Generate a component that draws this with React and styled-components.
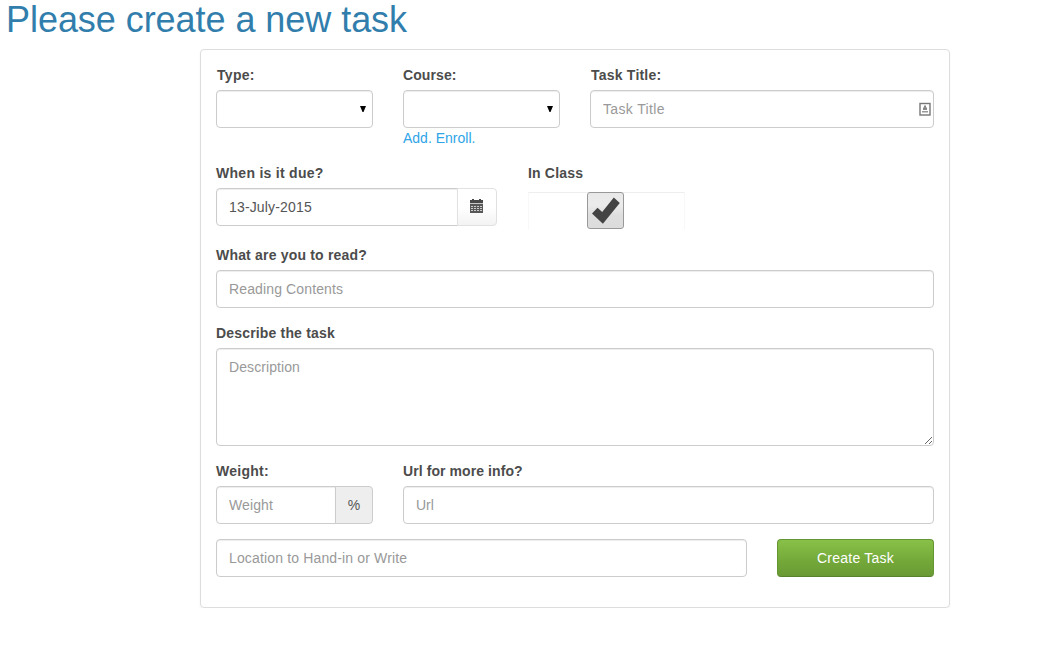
import React from "react";
import styled, { createGlobalStyle, css } from "styled-components";

const Global = createGlobalStyle`
  *, *::before, *::after { box-sizing: border-box; }
  body { margin: 0; background: #fff; color: #555; font: 14px/20px "Liberation Sans", Arial, sans-serif; }
`;
const Page = styled.main`
  display: flex;
  flex-direction: column;
`;
const Heading = styled.h1`
  margin: 0 0 9px 6px;
  height: 40px;
  font-size: 36px;
  line-height: 40px;
  font-weight: 400;
  letter-spacing: -0.05px;
  color: #317eac;
  white-space: nowrap;
`;
const Panel = styled.form`
  width: 750px;
  height: 559px;
  margin-left: 200px;
  padding: 15px;
  border: 1px solid #ddd;
  border-radius: 4px;
  box-shadow: 0 1px 2px rgba(0, 0, 0, 0.05);
`;
const Row = styled.div`
  display: grid;
  grid-template-columns: ${(p) => p.$cols || "1fr"};
  column-gap: ${(p) => p.$gap || 30}px;
  margin-bottom: 15px;
`;
const Field = styled.div`
  display: flex;
  flex-direction: column;
  min-width: 0;
`;
const Label = styled.label`
  height: 20px;
  margin-bottom: 5px;
  padding-left: ${(p) => p.$indent || 0}px;
  font-weight: 700;
  letter-spacing: ${(p) => p.$track || 0}px;
  color: #4c4c4c;
  white-space: nowrap;
`;
const control = css`
  display: block;
  width: 100%;
  min-width: 0;
  height: 38px;
  margin: 0;
  padding: 8px 12px;
  font: inherit;
  letter-spacing: ${(p) => p.$track || 0}px;
  color: #555;
  background: #fff;
  border: 1px solid #ccc;
  border-radius: 4px;
  box-shadow: inset 0 1px 1px rgba(0, 0, 0, 0.075);
  outline: 0;
  &::placeholder { color: #999; opacity: 1; }
`;
const Input = styled.input`
  ${control}
  ${(p) => p.$joined && "border-top-right-radius: 0; border-bottom-right-radius: 0;"}
`;
const TextArea = styled.textarea`
  ${control}
  height: 98px;
  resize: vertical;
`;
const SelectBox = styled.button.attrs({ type: "button" })`
  ${control}
  display: flex;
  align-items: center;
  justify-content: flex-end;
  padding: 0 5px 0 12px;
`;
const Caret = () => (
  <svg width="8" height="6" viewBox="0 0 8 6"><path d="M1 0h6L4.5 6h-1z" fill="#000" /></svg>
);
const Links = styled.div`
  height: 20px;
  color: #2fa4e7;
`;
const Link = styled.a`
  color: inherit;
`;
const Group = styled.div`
  display: flex;
`;
const IconInput = styled.div`
  display: grid;
  align-items: center;
  & > * { grid-area: 1 / 1; }
  & > svg { justify-self: end; margin-right: 3px; }
`;
const Addon = styled.span`
  flex: none;
  display: flex;
  align-items: center;
  justify-content: center;
  width: 38px;
  margin-left: -1px;
  border: 1px solid #ccc;
  border-radius: 0 4px 4px 0;
  background: #eee;
`;
const DateButton = styled.button`
  flex: none;
  display: flex;
  align-items: center;
  justify-content: center;
  width: 40px;
  height: 38px;
  margin-left: -1px;
  padding: 0 1px 2px 0;
  border: 1px solid #e1e1e1;
  border-radius: 0 4px 4px 0;
  background: linear-gradient(#fff, #fff 50%, #f3f3f3);
`;
const CheckArea = styled.div`
  display: flex;
  justify-content: center;
  height: 38px;
  margin-top: 4px;
  padding-right: 2px;
  border: 1px solid #f8f8f8;
  border-top-color: #eee;
  border-bottom: 0;
`;
const CheckBox = styled.span`
  flex: none;
  width: 37px;
  height: 37px;
  margin-top: -1px;
  border: 1px solid #999;
  border-radius: 3px;
  background: linear-gradient(#e8e8e8, #ececec 12px, #dedede 22px, #dcdcdc);
  & > svg { display: block; }
`;
const Submit = styled.button`
  height: 38px;
  padding: 0;
  font: inherit;
  letter-spacing: 0.25px;
  color: #fff;
  border: 1px solid #669533;
  border-bottom-color: #59822c;
  border-radius: 4px;
  background: linear-gradient(#88c149, #73a839 60%, #699934);
`;

export default function App() {
  return (
    <Page>
      <Global />
      <Heading>Please create a new task</Heading>
      <Panel onSubmit={(e) => e.preventDefault()}>
        <Row $cols="157px 157px 1fr">
          <Field><Label $indent={1} $track={0.3}>Type:</Label><SelectBox><Caret /></SelectBox></Field>
          <Field>
            <Label $track={0.1}>Course:</Label><SelectBox><Caret /></SelectBox>
            <Links><Link>Add.</Link> <Link>Enroll.</Link></Links>
          </Field>
          <Field>
            <Label $indent={1} $track={0.22}>Task Title:</Label>
            <IconInput>
              <Input placeholder="Task Title" $track={0.35} />
              <svg width="12" height="14" viewBox="0 0 12 14">
                <rect x="1" y="1.5" width="10" height="11.5" fill="#fff" stroke="#777" strokeWidth="1.4" />
                <path d="M5 3.5h2v2h1V8H4V5.5h1z" fill="#888" />
                <path d="M3 9h6v1.5H3z" fill="#999" />
              </svg>
            </IconInput>
          </Field>
        </Row>
        <Row $cols="281px 157px" $gap={31}>
          <Field>
            <Label $track={0.28}>When is it due?</Label>
            <Group>
              <Input defaultValue="13-July-2015" $joined $track={0.16} />
              <DateButton type="button">
                <svg width="13" height="14" viewBox="0 0 13 14" shapeRendering="crispEdges">
                  <path d="M0 1h2V0h2v1h5V0h2v1h2v3H0z" fill="#484848" />
                  <path d="M0 4h13v1H0z" fill="#c8c8c8" />
                  <path d="M0 5h13v9H0z" fill="#585858" />
                  <path d="M1 7.5h11M1 9.5h11M1 11.5h11" stroke="#ccc" strokeDasharray="2 1" />
                </svg>
              </DateButton>
            </Group>
          </Field>
          <Field>
            <Label $track={0.18}>In Class</Label>
            <CheckArea>
              <CheckBox>
                <svg width="35" height="35" viewBox="0 0 35 35"><path d="M4 20.5l5.5-5.7 4.7 4.3L25.8 4.5l6 5.5-16.9 20.8z" fill="#444" /></svg>
              </CheckBox>
            </CheckArea>
          </Field>
        </Row>
        <Row>
          <Field><Label $track={0.19}>What are you to read?</Label><Input placeholder="Reading Contents" $track={0.13} /></Field>
        </Row>
        <Row>
          <Field><Label $track={0.17}>Describe the task</Label><TextArea placeholder="Description" $track={0.08} /></Field>
        </Row>
        <Row $cols="157px 1fr">
          <Field>
            <Label $track={0.25}>Weight:</Label>
            <Group><Input placeholder="Weight" $joined $track={0.1} /><Addon>%</Addon></Group>
          </Field>
          <Field><Label $track={0.08}>Url for more info?</Label><Input placeholder="Url" /></Field>
        </Row>
        <Row $cols="1fr 157px">
          <Input placeholder="Location to Hand-in or Write" $track={0.15} />
          <Submit>Create Task</Submit>
        </Row>
      </Panel>
    </Page>
  );
}
